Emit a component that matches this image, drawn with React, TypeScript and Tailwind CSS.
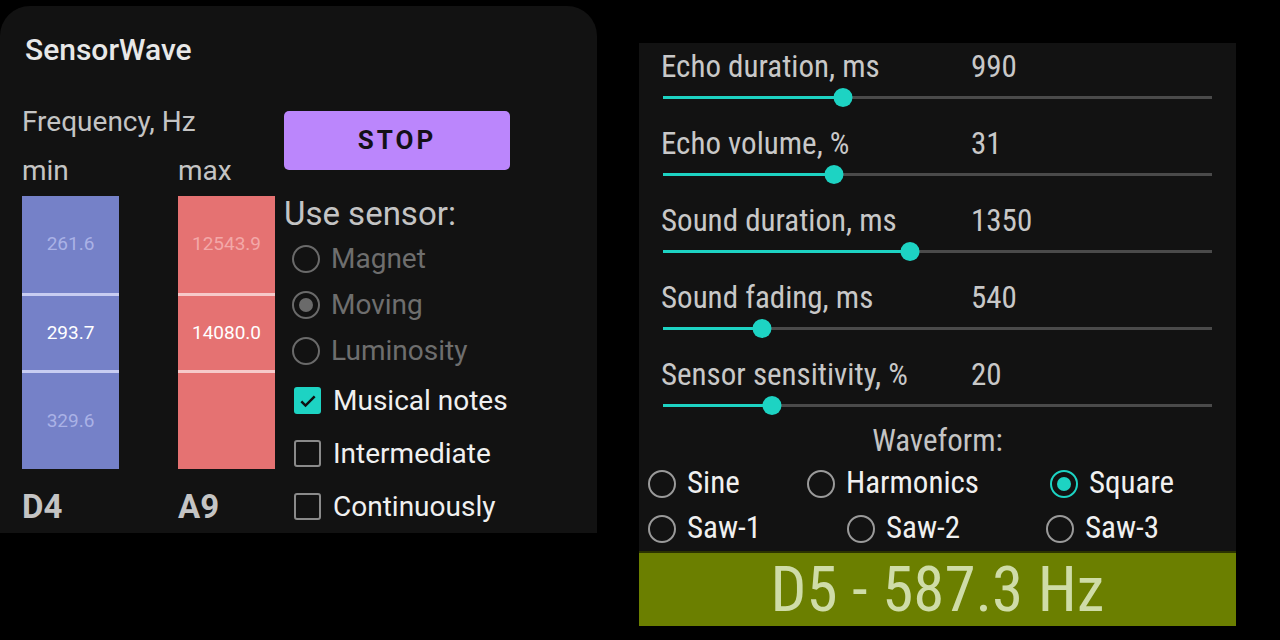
import React from "react";

const cond = { fontFamily: '"Roboto Condensed", Roboto, "Liberation Sans", sans-serif' };

const sliders = [
  { label: "Echo duration, ms", value: "990", pos: 180 },
  { label: "Echo volume, %", value: "31", pos: 171 },
  { label: "Sound duration, ms", value: "1350", pos: 247 },
  { label: "Sound fading, ms", value: "540", pos: 99 },
  { label: "Sensor sensitivity, %", value: "20", pos: 109 },
];

function Radio({ checked, disabled, accent }: { checked?: boolean; disabled?: boolean; accent?: boolean }) {
  const ring = accent ? "border-[#1dd3c3]" : disabled ? "border-[#6a6a6a]" : "border-[#9a9a9a]";
  const dot = accent ? "bg-[#1dd3c3]" : "bg-[#6a6a6a]";
  return (
    <span className={`flex h-[28px] w-[28px] shrink-0 items-center justify-center rounded-full border-[2.5px] ${ring}`}>
      {checked && <span className={`h-[14px] w-[14px] rounded-full ${dot}`} />}
    </span>
  );
}

function Checkbox({ checked }: { checked?: boolean }) {
  if (checked) {
    return (
      <span className="flex h-[27px] w-[27px] shrink-0 items-center justify-center rounded-[3px] bg-[#1dd3c3]">
        <svg width="20" height="20" viewBox="0 0 24 24" fill="none">
          <path d="M4 12.5l5 5L20 6.5" stroke="#101010" strokeWidth="3" />
        </svg>
      </span>
    );
  }
  return <span className="h-[27px] w-[27px] shrink-0 rounded-[3px] border-[2.5px] border-[#8a8a8a]" />;
}

function Bar({ color, line, dim, values }: { color: string; line: string; dim: string; values: string[] }) {
  return (
    <div className={`flex h-[273px] w-[97px] flex-col ${color} text-[19px]`}>
      <div className={`flex h-[97px] items-center justify-center ${dim}`}>{values[0]}</div>
      <div className={`h-[3px] ${line}`} />
      <div className="flex h-[74px] items-center justify-center text-white">{values[1]}</div>
      <div className={`h-[3px] ${line}`} />
      <div className={`flex flex-1 items-center justify-center ${dim}`}>{values[2]}</div>
    </div>
  );
}

export default function App() {
  return (
    <div
      className="flex h-[640px] w-[1280px] items-start bg-black"
      style={{ fontFamily: 'Roboto, "Liberation Sans", sans-serif' }}
    >
      {/* left panel */}
      <div className="mt-[6px] flex h-[527px] w-[597px] flex-col rounded-t-[30px] bg-[#121212] pl-[22px]">
        <div className="mt-[27px] pl-[3px] text-[30px] font-medium leading-[34px] text-[#e8e8e8]">SensorWave</div>
        <div className="mt-[39px] flex">
          <div className="flex w-[262px] flex-col">
            <div className="text-[28px] leading-[32px] text-[#c4c4c4]">Frequency, Hz</div>
            <div className="mt-[17px] flex text-[28px] leading-[32px] text-[#c4c4c4]">
              <span className="w-[156px]">min</span>
              <span>max</span>
            </div>
            <div className="mt-[9px] flex gap-[59px]">
              <Bar color="bg-[#7581c8]" line="bg-[#c8cdf2]" dim="text-[#aab2e6]" values={["261.6", "293.7", "329.6"]} />
              <Bar color="bg-[#e57272]" line="bg-[#f6caca]" dim="text-[#f3a8a8]" values={["12543.9", "14080.0", ""]} />
            </div>
            <div className="mt-[20px] flex text-[33px] font-bold leading-[36px] text-[#c4c4c4]">
              <span className="w-[156px]">D4</span>
              <span>A9</span>
            </div>
          </div>
          <div className="flex flex-col">
            <div className="mt-[5px] flex h-[59px] w-[226px] items-center justify-center rounded-[5px] bg-[#bb86fc] text-[26px] font-bold tracking-[3px] text-[#141018]">
              STOP
            </div>
            <div className="mt-[25px] text-[33px] leading-[38px] text-[#c4c4c4]">Use sensor:</div>
            <div className="mt-[3px] flex flex-col pl-[8px] text-[28px] text-[#6e6e6e]">
              {["Magnet", "Moving", "Luminosity"].map((s, i) => (
                <div key={s} className="flex h-[46px] items-center gap-[11px]">
                  <Radio disabled checked={i === 1} />
                  <span>{s}</span>
                </div>
              ))}
            </div>
            <div className="flex flex-col pl-[10px] text-[28px] text-[#f0f0f0]">
              {["Musical notes", "Intermediate", "Continuously"].map((s, i) => (
                <div key={s} className="flex h-[53px] items-center gap-[12px]">
                  <Checkbox checked={i === 0} />
                  <span>{s}</span>
                </div>
              ))}
            </div>
          </div>
        </div>
      </div>

      {/* right panel */}
      <div className="ml-[42px] mt-[43px] flex h-[583px] w-[597px] flex-col bg-[#121212]" style={cond}>
        {sliders.map((s) => (
          <div key={s.label} className="flex h-[77px] flex-col">
            <div className="mt-[8px] flex h-[32px] items-center pl-[22px] text-[31px] text-[#c8c8c8]">
              <span className="w-[310px]">{s.label}</span>
              <span>{s.value}</span>
            </div>
            <div className="relative ml-[24px] mt-[13px] h-[3px] w-[549px] bg-[#4a4a4a]">
              <div className="h-full bg-[#1dd3c3]" style={{ width: s.pos }} />
              <div
                className="absolute top-[-8px] h-[19px] w-[19px] -translate-x-1/2 rounded-full bg-[#1dd3c3]"
                style={{ left: s.pos }}
              />
            </div>
          </div>
        ))}
        <div className="flex h-[26px] items-center justify-center text-[31px] text-[#c4c4c4]">Waveform:</div>
        <div className="mt-[7px] flex h-[45px] items-center pl-[9px] text-[31px] text-[#f0f0f0]">
          <div className="flex w-[159px] items-center gap-[11px]">
            <Radio />
            <span>Sine</span>
          </div>
          <div className="flex w-[243px] items-center gap-[11px]">
            <Radio />
            <span>Harmonics</span>
          </div>
          <div className="flex items-center gap-[11px]">
            <Radio checked accent />
            <span>Square</span>
          </div>
        </div>
        <div className="flex h-[45px] items-center text-[31px] text-[#f0f0f0]">
          {["Saw-1", "Saw-2", "Saw-3"].map((s) => (
            <div key={s} className="flex w-[199px] items-center gap-[11px] pl-[9px]">
              <Radio />
              <span>{s}</span>
            </div>
          ))}
        </div>
        <div className="flex flex-1 items-center justify-center border-t-[2px] border-[#2a3300] bg-[#6b7f00] text-[63px] leading-none text-[#cfdca8]">
          D5 - 587.3 Hz
        </div>
      </div>
    </div>
  );
}
